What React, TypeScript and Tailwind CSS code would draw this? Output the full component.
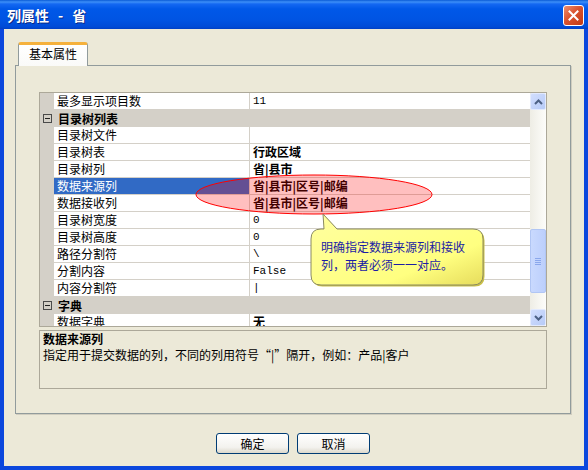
type Row =
  | { cat: string }
  | { k: string; v: string; bold?: boolean; mono?: boolean; selected?: boolean };

const rows: Row[] = [
  { k: '最多显示项目数', v: '11', mono: true },
  { cat: '目录树列表' },
  { k: '目录树文件', v: '' },
  { k: '目录树表', v: '行政区域', bold: true },
  { k: '目录树列', v: '省|县市', bold: true },
  { k: '数据来源列', v: '省|县市|区号|邮编', bold: true, selected: true },
  { k: '数据接收列', v: '省|县市|区号|邮编', bold: true },
  { k: '目录树宽度', v: '0', mono: true },
  { k: '目录树高度', v: '0', mono: true },
  { k: '路径分割符', v: '\\', mono: true },
  { k: '分割内容', v: 'False', mono: true },
  { k: '内容分割符', v: '|', mono: true },
  { cat: '字典' },
  { k: '数据字典', v: '无', bold: true },
];

export default function App() {
  return (
    <div className="relative flex h-[470px] w-[588px] flex-col overflow-hidden bg-[#ece9d8] font-['Noto_Sans_CJK_SC',sans-serif] text-[12px] text-black">
      {/* Title bar */}
      <div className="flex h-[29px] shrink-0 items-center bg-[linear-gradient(to_bottom,#0a5bd6_0px,#3d8ff8_2px,#1468f2_4px,#0058e8_9px,#0054e3_20px,#004bd6_27px,#0040c4_29px)] pl-[7px] pr-[4px]">
        <div className="flex items-center text-[14px] font-bold leading-none text-white [text-shadow:1px_1px_0_#0b2a86]">
          <span>列属性</span>
          <span className="mx-[9px]">-</span>
          <span>省</span>
        </div>
        <CloseButton />
      </div>

      {/* Window body */}
      <div className="flex flex-1 flex-col border-x-4 border-b-4 border-[#0b47dd] pl-[11px] pr-[13px] pt-[13px]">
        {/* Tab header */}
        <div className="relative z-10 -mb-px flex h-[24px] pl-[3px]">
          <div className="flex w-[70px] items-center justify-center rounded-t-[3px] border-x border-t-[3px] border-x-[#919b9c] border-t-[#f5b13c] bg-[linear-gradient(to_bottom,#ffffff,#fafaf8)] pb-[4px]">
            基本属性
          </div>
        </div>

        {/* Tab panel */}
        <div className="h-[349px] border border-[#919b9c] pl-[23px] pt-[26px] shadow-[1px_1px_0_#d0cdbf]">
          <div className="flex h-[235px] w-[508px] border border-[#aca899] bg-white">
            <div className="w-[490px] overflow-hidden">
              {rows.map((r, i) =>
                'cat' in r ? (
                  <div key={i} className="flex h-[17px] items-center bg-[#d4d0c8]">
                    <div className="flex w-[14px] justify-center">
                      <div className="flex h-[9px] w-[9px] items-center justify-center border border-[#4a4a4a]">
                        <div className="h-px w-[5px] bg-[#222]" />
                      </div>
                    </div>
                    <span className="pl-[4px] font-bold leading-[16px]">{r.cat}</span>
                  </div>
                ) : (
                  <div key={i} className="flex h-[17px] border-b border-[#d4d0c8]">
                    <div className="w-[14px] bg-[#d4d0c8]" />
                    <div
                      className={`w-[195px] pl-[3px] leading-[16px] ${
                        r.selected ? 'bg-[#316ac5] text-white' : ''
                      }`}
                    >
                      {r.k}
                    </div>
                    <div className="w-px bg-[#d4d0c8]" />
                    <div
                      className={`flex-1 pl-[3px] leading-[16px] ${r.bold ? 'font-bold' : ''} ${
                        r.mono ? "font-['Liberation_Mono',monospace] text-[11px]" : ''
                      }`}
                    >
                      {r.v}
                    </div>
                  </div>
                )
              )}
            </div>
            <Scrollbar />
          </div>

          {/* Description */}
          <div className="mt-[3px] h-[59px] w-[508px] border border-[#aca899] px-[3px] leading-[16px]">
            <div className="font-bold">数据来源列</div>
            <div>指定用于提交数据的列，不同的列用符号“|”隔开，例如：产品|客户</div>
          </div>
        </div>

        {/* Buttons */}
        <div className="mt-[19px] flex justify-center gap-[8px]">
          <XpButton label="确定" />
          <XpButton label="取消" />
        </div>
      </div>

      {/* Red ellipse annotation */}
      <svg className="absolute left-[195px] top-[174px]" width="240" height="42" aria-hidden>
        <ellipse cx="119" cy="20.5" rx="118" ry="19.5" fill="rgba(255,0,0,0.25)" stroke="#ff0000" strokeWidth="1" />
      </svg>

      {/* Callout */}
      <svg className="absolute left-[305px] top-[210px]" width="186" height="82" aria-hidden>
        <defs>
          <linearGradient id="tip" x1="0" y1="0" x2="1" y2="1">
            <stop offset="0" stopColor="#ffffa0" />
            <stop offset="0.7" stopColor="#ffff80" />
            <stop offset="1" stopColor="#e6dc5c" />
          </linearGradient>
        </defs>
        <path
          d="M16 19 L19 19 L18 4 L32 19 L168 19 Q178 19 178 29 L178 65 Q178 75 168 75 L16 75 Q6 75 6 65 L6 29 Q6 19 16 19 Z"
          fill="#c9bf48"
          transform="translate(1.5 1.5)"
        />
        <path
          d="M16 19 L19 19 L18 4 L32 19 L168 19 Q178 19 178 29 L178 65 Q178 75 168 75 L16 75 Q6 75 6 65 L6 29 Q6 19 16 19 Z"
          fill="url(#tip)"
          stroke="#8a8a62"
          strokeWidth="1"
        />
      </svg>
      <div className="absolute left-[321px] top-[238px] leading-[18px] text-[#1c1ca4]">
        <div>明确指定数据来源列和接收</div>
        <div>列，两者必须一一对应。</div>
      </div>
    </div>
  );
}

function CloseButton() {
  return (
    <div className="ml-auto mt-[1px] flex h-[21px] w-[21px] items-center justify-center rounded-[3px] border border-white bg-[linear-gradient(135deg,#ec8f6f,#d9532f_45%,#c23a14)]">
      <svg width="11" height="11" viewBox="0 0 11 11" aria-hidden>
        <path d="M1.5 1.5 L9.5 9.5 M9.5 1.5 L1.5 9.5" stroke="#fff" strokeWidth="2" strokeLinecap="square" />
      </svg>
    </div>
  );
}

function Scrollbar() {
  return (
    <div className="flex w-[16px] flex-col bg-[linear-gradient(to_right,#eeede5,#fdfdfa)]">
      <ArrowButton dir="up" />
      <div className="flex-1">
        <div className="mt-[119px] flex h-[64px] items-center justify-center rounded-[2px] border border-[#b1c6f4] bg-[linear-gradient(to_right,#c9d9fe,#bccffc)]">
          <svg width="8" height="8" viewBox="0 0 8 8" aria-hidden>
            <path d="M1 1.5 H7 M1 3.5 H7 M1 5.5 H7 M1 7.5 H7" stroke="#8ba8ec" strokeWidth="1" />
          </svg>
        </div>
      </div>
      <ArrowButton dir="down" />
    </div>
  );
}

function ArrowButton({ dir }: { dir: 'up' | 'down' }) {
  return (
    <div className="flex h-[17px] items-center justify-center rounded-[2px] border border-[#e2eafe] bg-[linear-gradient(to_bottom_right,#d2defd,#b7cbf8)]">
      <svg width="9" height="6" viewBox="0 0 9 6" aria-hidden>
        <path
          d={dir === 'up' ? 'M1 5 L4.5 1.5 L8 5' : 'M1 1 L4.5 4.5 L8 1'}
          fill="none"
          stroke="#4d6185"
          strokeWidth="2"
        />
      </svg>
    </div>
  );
}

function XpButton({ label }: { label: string }) {
  return (
    <div className="flex h-[21px] w-[73px] items-center justify-center rounded-[3px] border border-[#003c74] bg-[linear-gradient(to_bottom,#ffffff,#f3f2ee_70%,#dcd8cc)] leading-none">
      {label}
    </div>
  );
}
